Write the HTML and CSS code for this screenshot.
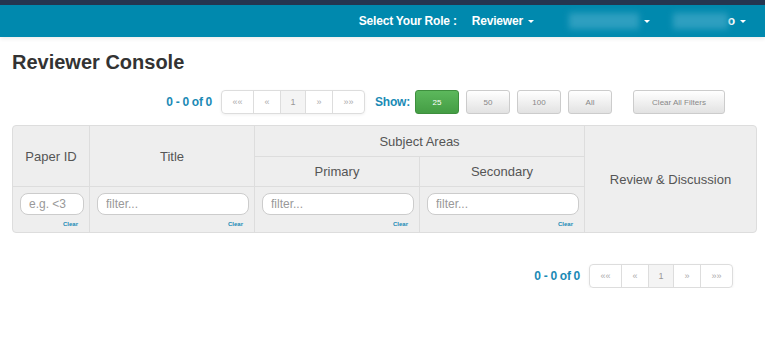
FILE: index.html
```html
<!DOCTYPE html>
<html>
<head>
    <title>Reviewer Console</title>
    <link rel="stylesheet" href="styles.css">
</head>
<body>
    <header class="topbar">
        <nav class="role-nav">
            <span class="role-label">Select Your Role :</span>
            <span class="role-item">Reviewer <i class="caret"></i></span>
            <span class="role-item"><span class="blur blur-wide"></span><i class="caret"></i></span>
            <span class="role-item"><span class="blur blur-narrow"></span>o <i class="caret"></i></span>
        </nav>
    </header>
    <main class="page">
        <h1 class="page-title">Reviewer Console</h1>

        <div class="toolbar">
            <span class="count">0 - 0 of 0</span>
            <ul class="pager">
                <li class="wide">&laquo;&laquo;</li>
                <li>&laquo;</li>
                <li class="active">1</li>
                <li>&raquo;</li>
                <li class="wide">&raquo;&raquo;</li>
            </ul>
            <span class="show-label">Show:</span>
            <button class="btn btn-green">25</button>
            <button class="btn">50</button>
            <button class="btn">100</button>
            <button class="btn">All</button>
            <button class="btn btn-clear">Clear All Filters</button>
        </div>

        <table class="grid">
            <colgroup>
                <col class="c-id">
                <col class="c-wide">
                <col class="c-wide">
                <col class="c-wide">
                <col>
            </colgroup>
            <thead>
                <tr class="row-top">
                    <th rowspan="2">Paper ID</th>
                    <th rowspan="2">Title</th>
                    <th colspan="2">Subject Areas</th>
                    <th rowspan="3" class="last">Review &amp; Discussion</th>
                </tr>
                <tr class="row-sub">
                    <th>Primary</th>
                    <th>Secondary</th>
                </tr>
                <tr class="filters">
                    <td><input type="text" placeholder="e.g. <3"><a class="clear">Clear</a></td>
                    <td><input type="text" placeholder="filter..."><a class="clear">Clear</a></td>
                    <td><input type="text" placeholder="filter..."><a class="clear">Clear</a></td>
                    <td><input type="text" placeholder="filter..."><a class="clear">Clear</a></td>
                </tr>
            </thead>
        </table>

        <div class="toolbar bottom">
            <span class="count">0 - 0 of 0</span>
            <ul class="pager">
                <li class="wide">&laquo;&laquo;</li>
                <li>&laquo;</li>
                <li class="active">1</li>
                <li>&raquo;</li>
                <li class="wide">&raquo;&raquo;</li>
            </ul>
        </div>
    </main>
</body>
</html>
```

FILE: styles.css
```css
body {
    margin: 0;
    font-family: "Liberation Sans", Arial, sans-serif;
    background-color: #fff;
    color: #333;
}

.topbar {
    border-top: 5px solid #253650;
    background-color: #0089ae;
    height: 32px;
    box-shadow: 0 2px 4px rgba(0, 0, 0, 0.08);
}
.role-nav {
    display: flex;
    justify-content: flex-end;
    align-items: center;
    height: 32px;
    padding-right: 19px;
    color: #fff;
    font-weight: bold;
    font-size: 12px;
    letter-spacing: -0.2px;
}
.role-label {
    margin-right: 15px;
}
.role-item {
    display: flex;
    align-items: center;
    margin-right: 11px;
}
.role-item:last-child {
    margin-right: 0;
}
.caret {
    display: inline-block;
    width: 0;
    height: 0;
    margin-left: 5px;
    border-left: 3px solid transparent;
    border-right: 3px solid transparent;
    border-top: 3px solid #fff;
}
.blur {
    display: inline-block;
    height: 16px;
    background-color: #2e9fc0;
    filter: blur(3px);
}
.blur-wide {
    width: 70px;
    margin-left: 24px;
}
.blur-narrow {
    width: 55px;
    margin-left: 12px;
}

.page {
    padding: 0 8px 0 12px;
}
.page-title {
    font-size: 20px;
    font-weight: bold;
    margin: 13px 0 0;
    line-height: 24px;
}

.toolbar {
    display: flex;
    align-items: center;
    justify-content: flex-end;
    padding-right: 32px;
    margin-top: 16px;
    height: 24px;
}
.count {
    color: #1a8ab5;
    font-weight: bold;
    font-size: 12px;
    letter-spacing: -0.3px;
    margin-right: 9px;
}
.pager {
    display: flex;
    list-style: none;
    margin: 0 10px 0 0;
    padding: 0;
    border: 1px solid #ddd;
    border-radius: 4px;
    box-shadow: 0 1px 3px rgba(0, 0, 0, 0.06);
}
.pager li {
    width: 26px;
    height: 22px;
    line-height: 22px;
    text-align: center;
    font-size: 9px;
    color: #aaa;
    border-left: 1px solid #ddd;
}
.pager li.wide {
    width: 31px;
}
.pager li:first-child {
    border-left: none;
}
.pager li.active {
    width: 24px;
    background-color: #f4f4f4;
    color: #999;
}
.show-label {
    color: #1a8ab5;
    font-weight: bold;
    font-size: 12px;
    letter-spacing: -0.2px;
    margin-right: 5px;
}
.btn {
    font-family: "Liberation Sans", Arial, sans-serif;
    font-size: 8px;
    color: #888;
    width: 44px;
    height: 24px;
    margin-left: 7px;
    border: 1px solid #ccc;
    border-radius: 3px;
    background: linear-gradient(#ffffff, #e2e2e2);
    padding: 0;
}
.btn:first-of-type {
    margin-left: 0;
}
.btn-green {
    color: #fff;
    border-color: #3e8f3e;
    background: linear-gradient(#5cb85c, #449d44);
}
.btn-clear {
    width: 92px;
    margin-left: 21px;
}

.grid {
    width: 745px;
    margin-top: 11px;
    table-layout: fixed;
    border-collapse: separate;
    border-spacing: 0;
    border: 1px solid #ddd;
    border-radius: 4px;
    background-color: #eee;
}
.c-id {
    width: 77px;
}
.c-wide {
    width: 165px;
}
.grid th {
    font-weight: normal;
    font-size: 13px;
    color: #555;
    border-right: 1px solid #ddd;
    border-bottom: 1px solid #ddd;
    padding: 0;
}
.grid th.last {
    border-right: none;
    border-bottom: none;
}
.row-top th {
    height: 30px;
}
.row-sub th {
    height: 29px;
}
.filters td {
    border-right: 1px solid #ddd;
    padding: 6px 5px 0 7px;
    height: 39px;
    vertical-align: top;
}
.filters input {
    display: block;
    box-sizing: border-box;
    width: 100%;
    height: 22px;
    border: 1px solid #ccc;
    border-radius: 8px;
    padding: 0 8px;
    font-family: "Liberation Sans", Arial, sans-serif;
    font-size: 12px;
    background-color: #fff;
}
.filters input::placeholder {
    color: #999;
}
.clear {
    display: block;
    text-align: right;
    font-size: 6px;
    font-weight: bold;
    color: #1a8ab5;
    margin-top: 6px;
    padding-right: 6px;
}

.toolbar.bottom {
    margin-top: 31px;
    padding-right: 12px;
}
.toolbar.bottom .pager {
    margin-right: 12px;
}
```
